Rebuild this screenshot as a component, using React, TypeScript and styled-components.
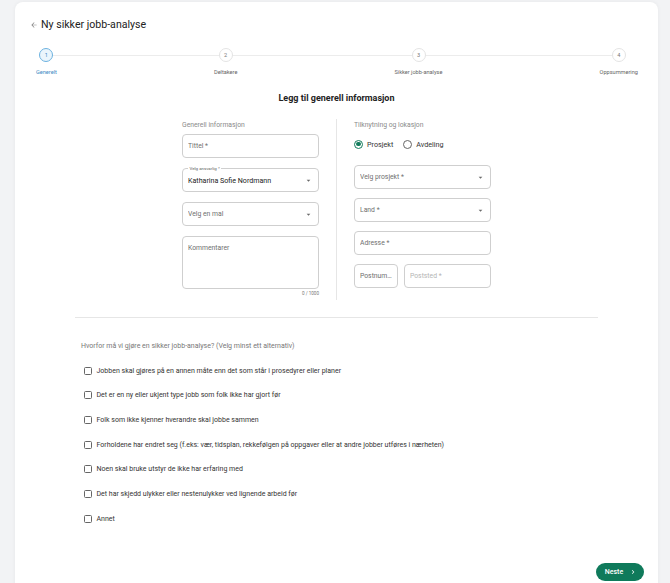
import React from 'react';
import styled, { createGlobalStyle } from 'styled-components';

const GlobalStyle = createGlobalStyle`
  html, body {
    margin: 0;
    padding: 0;
    background: #f2f3f5;
  }
  body {
    font-family: Roboto, "Liberation Sans", Arial, sans-serif;
    color: #222;
  }
  * {
    box-sizing: border-box;
  }
`;

const Page = styled.div`
  height: 583px;
  overflow: hidden;
  padding: 2px 12px 0 15px;
`;

const Card = styled.div`
  background: #fff;
  border-radius: 8px;
  box-shadow: 0 0 4px rgba(0, 0, 0, 0.05);
  min-height: 640px;
  padding-top: 16px;
`;

const Header = styled.div`
  display: flex;
  align-items: center;
  gap: 3px;
  padding-left: 15px;
  height: 14px;
`;

const Title = styled.h1`
  margin: 0;
  font-size: 10.6px;
  font-weight: 400;
  color: #222;
  line-height: 14px;
`;

const Stepper = styled.div`
  position: relative;
  display: flex;
  justify-content: space-between;
  margin-top: 16px;
  padding: 0 20px 0 21px;

  /* connector line running behind the step dots */
  &::before {
    content: '';
    position: absolute;
    top: 7px;
    left: 32px;
    right: 41px;
    height: 1px;
    background: #ececec;
  }
`;

const Step = styled.div`
  position: relative;
  display: flex;
  flex-direction: column;
  align-items: center;
`;

const StepDot = styled.div<{ $active?: boolean }>`
  width: 14px;
  height: 14px;
  border-radius: 50%;
  border: 1px solid ${p => (p.$active ? '#6cb2e0' : '#e4e4e4')};
  background: ${p => (p.$active ? '#eaf5fc' : '#fff')};
  color: ${p => (p.$active ? '#3f8ac4' : '#777')};
  font-size: 5.6px;
  display: flex;
  align-items: center;
  justify-content: center;
`;

const StepLabel = styled.div<{ $active?: boolean }>`
  margin-top: 6px;
  font-size: 5.6px;
  line-height: 8px;
  color: ${p => (p.$active ? '#3f8ac4' : '#666')};
  white-space: nowrap;
`;

const Heading = styled.h2`
  margin: 16px 0 0;
  text-align: center;
  font-size: 9px;
  line-height: 12px;
  font-weight: 700;
  color: #222;
`;

const Columns = styled.div`
  display: grid;
  grid-template-columns: 137px 1px 137px;
  column-gap: 17px;
  justify-content: center;
  margin-top: 16.5px;
`;

const Divider = styled.div`
  background: #e6e6e6;
  margin: -2px 0 -3px;
`;

const Column = styled.div`
  display: flex;
  flex-direction: column;
`;

const SectionLabel = styled.div`
  font-size: 6.8px;
  line-height: 9px;
  color: #8a8a8a;
`;

const Fields = styled.div<{ $gap: number; $top: number }>`
  display: flex;
  flex-direction: column;
  gap: ${p => p.$gap}px;
  margin-top: ${p => p.$top}px;
`;

const Field = styled.div<{ $h?: number; $multi?: boolean; $w?: number }>`
  position: relative;
  flex: none;
  height: ${p => p.$h ?? 24}px;
  width: ${p => (p.$w ? `${p.$w}px` : 'auto')};
  border: 1px solid #cfcfcf;
  border-radius: 4px;
  display: flex;
  align-items: ${p => (p.$multi ? 'flex-start' : 'center')};
  padding: ${p => (p.$multi ? '7px 5px 0' : p.$w ? '0 2px 0 5px' : '0 5px')};
  font-size: 6.8px;
  color: #6f6f6f;
`;

const WideField = styled(Field)`
  flex: 1;
`;

const FieldText = styled.span<{ $value?: boolean; $muted?: boolean }>`
  flex: 1;
  min-width: 0;
  overflow: hidden;
  white-space: nowrap;
  text-overflow: ellipsis;
  color: ${p => (p.$value ? '#222' : p.$muted ? '#b5b5b5' : '#6f6f6f')};
  font-size: ${p => (p.$value ? '7.1px' : '6.8px')};
`;

const FloatLabel = styled.span`
  position: absolute;
  top: -3px;
  left: 5px;
  padding: 0 1.5px;
  background: #fff;
  font-size: 4.4px;
  line-height: 5px;
  color: #666;
`;

const Counter = styled.div`
  margin-top: 1px;
  text-align: right;
  font-size: 4.6px;
  line-height: 7px;
  color: #777;
`;

const Row = styled.div`
  display: flex;
  gap: 6.5px;
`;

const RadioRow = styled.div`
  display: flex;
  align-items: center;
  gap: 10px;
  height: 12px;
  margin-top: 8.5px;
`;

const RadioOption = styled.label`
  display: flex;
  align-items: center;
  gap: 4px;
  font-size: 7.2px;
  color: #333;
`;

const RadioDot = styled.span<{ $checked?: boolean }>`
  width: 9px;
  height: 9px;
  border-radius: 50%;
  border: 1px solid ${p => (p.$checked ? '#137c5d' : '#666')};
  display: flex;
  align-items: center;
  justify-content: center;

  &::after {
    content: '';
    width: 4.5px;
    height: 4.5px;
    border-radius: 50%;
    background: ${p => (p.$checked ? '#137c5d' : 'transparent')};
  }
`;

const Rule = styled.hr`
  border: 0;
  height: 1px;
  background: #e6e6e6;
  margin: 20px 60px 0;
`;

const Questions = styled.div`
  padding: 0 60px 0 66px;
  margin-top: 23px;
`;

const Question = styled.div`
  font-size: 7px;
  line-height: 10px;
  color: #777;
`;

const Options = styled.div`
  margin-top: 7.5px;
  padding-left: 3px;
`;

const Option = styled.label`
  display: flex;
  align-items: center;
  gap: 4.5px;
  height: 24.67px;
  font-size: 7px;
  color: #333;
`;

const Box = styled.span`
  width: 8px;
  height: 8px;
  border: 1.2px solid #666;
  border-radius: 1.5px;
  flex: none;
`;

const Footer = styled.div`
  display: flex;
  justify-content: flex-end;
  padding-right: 14px;
  margin-top: 32px;
`;

const NextButton = styled.button`
  display: flex;
  align-items: center;
  justify-content: center;
  gap: 6px;
  width: 48px;
  height: 18px;
  border: 0;
  border-radius: 9px;
  background: #0f7a5b;
  color: #fff;
  font-family: inherit;
  font-size: 7px;
  font-weight: 500;
  padding: 0 0 0 2px;
`;

const Caret = () => (
  <svg width="9" height="9" viewBox="0 0 24 24" fill="#6a6a6a">
    <path d="M7 10l5 5 5-5z" />
  </svg>
);

const steps = ['Generelt', 'Deltakere', 'Sikker jobb-analyse', 'Oppsummering'];

const reasons = [
  'Jobben skal gjøres på en annen måte enn det som står i prosedyrer eller planer',
  'Det er en ny eller ukjent type jobb som folk ikke har gjort før',
  'Folk som ikke kjenner hverandre skal jobbe sammen',
  'Forholdene har endret seg (f.eks: vær, tidsplan, rekkefølgen på oppgaver eller at andre jobber utføres i nærheten)',
  'Noen skal bruke utstyr de ikke har erfaring med',
  'Det har skjedd ulykker eller nestenulykker ved lignende arbeid før',
  'Annet',
];

export default function App() {
  return (
    <>
      <GlobalStyle />
      <Page>
        <Card>
          <Header>
            <svg width="8" height="8" viewBox="0 0 24 24" fill="#888">
              <path d="M20 11H7.83l5.59-5.59L12 4l-8 8 8 8 1.41-1.41L7.83 13H20v-2z" />
            </svg>
            <Title>Ny sikker jobb-analyse</Title>
          </Header>

          <Stepper>
            {steps.map((s, i) => (
              <Step key={s}>
                <StepDot $active={i === 0}>{i + 1}</StepDot>
                <StepLabel $active={i === 0}>{s}</StepLabel>
              </Step>
            ))}
          </Stepper>

          <Heading>Legg til generell informasjon</Heading>

          <Columns>
            <Column>
              <SectionLabel>Generell informasjon</SectionLabel>
              <Fields $gap={10} $top={4.5}>
                <Field>
                  <FieldText>Tittel *</FieldText>
                </Field>
                <Field>
                  <FloatLabel>Velg ansvarlig *</FloatLabel>
                  <FieldText $value>Katharina Sofie Nordmann</FieldText>
                  <Caret />
                </Field>
                <Field>
                  <FieldText>Velg en mal</FieldText>
                  <Caret />
                </Field>
                <Field $h={53} $multi>
                  <FieldText>Kommentarer</FieldText>
                </Field>
              </Fields>
              <Counter>0 / 1000</Counter>
            </Column>

            <Divider />

            <Column>
              <SectionLabel>Tilknytning og lokasjon</SectionLabel>
              <RadioRow>
                <RadioOption>
                  <RadioDot $checked />
                  Prosjekt
                </RadioOption>
                <RadioOption>
                  <RadioDot />
                  Avdeling
                </RadioOption>
              </RadioRow>
              <Fields $gap={9} $top={15}>
                <Field>
                  <FieldText>Velg prosjekt *</FieldText>
                  <Caret />
                </Field>
                <Field>
                  <FieldText>Land *</FieldText>
                  <Caret />
                </Field>
                <Field>
                  <FieldText>Adresse *</FieldText>
                </Field>
                <Row>
                  <Field $w={43.5}>
                    <FieldText>Postnummer *</FieldText>
                  </Field>
                  <WideField>
                    <FieldText $muted>Poststed *</FieldText>
                  </WideField>
                </Row>
              </Fields>
            </Column>
          </Columns>

          <Rule />

          <Questions>
            <Question>Hvorfor må vi gjøre en sikker jobb-analyse? (Velg minst ett alternativ)</Question>
            <Options>
              {reasons.map(r => (
                <Option key={r}>
                  <Box />
                  {r}
                </Option>
              ))}
            </Options>
          </Questions>

          <Footer>
            <NextButton>
              Neste
              <svg width="8" height="8" viewBox="0 0 24 24" fill="#fff">
                <path d="M10 6 8.59 7.41 13.17 12l-4.58 4.59L10 18l6-6z" />
              </svg>
            </NextButton>
          </Footer>
        </Card>
      </Page>
    </>
  );
}
